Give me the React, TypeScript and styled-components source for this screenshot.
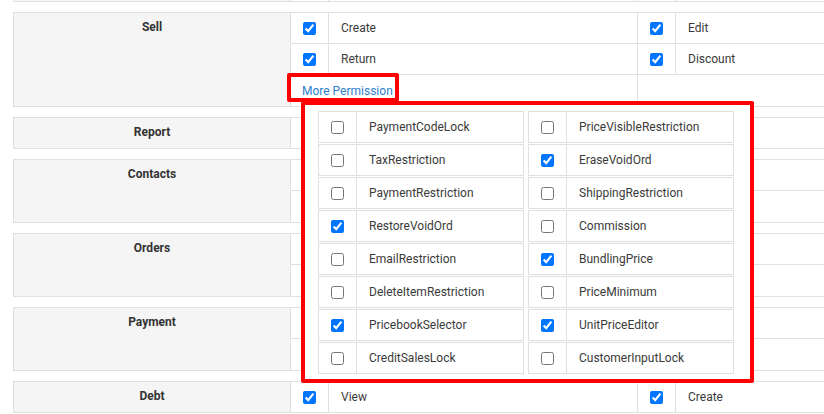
import React from "react";
import styled, { createGlobalStyle } from "styled-components";

const GlobalStyle = createGlobalStyle`
  html, body { margin: 0; padding: 0; overflow: hidden; background: #fff; }
  body {
    font-family: Roboto, "Liberation Sans", Arial, sans-serif;
    font-size: 12px;
    color: #333;
  }
`;

const Page = styled.div`
  width: 1000px;
  padding-left: 13px;
  margin-top: -30px;
  display: flex;
  flex-direction: column;
  gap: 10px;
`;

const Block = styled.section`
  display: flex;
  border: 1px solid #e0e0e0;
`;

const Label = styled.div`
  flex: 0 0 277px;
  box-sizing: border-box;
  border-right: 1px solid #e0e0e0;
  background: #f5f5f5;
  font-weight: 700;
  text-align: center;
  line-height: 28px;
  color: #333;
`;

const Rows = styled.div`
  flex: 1;
  display: flex;
  flex-direction: column;
`;

const Row = styled.div<{ $h: number; $last?: boolean }>`
  display: grid;
  grid-template-columns: 38px 309px 38px 1fr;
  box-sizing: border-box;
  height: ${(p) => p.$h}px;
  border-bottom: ${(p) => (p.$last ? "none" : "1px solid #e0e0e0")};
`;

const MoreRow = styled.div`
  display: grid;
  grid-template-columns: 347px 1fr;
  height: 31px;
`;

const CheckCell = styled.div`
  display: flex;
  align-items: center;
  justify-content: center;
  border-right: 1px solid #e0e0e0;
`;

const TextCell = styled.div<{ $divider?: boolean }>`
  display: flex;
  align-items: center;
  padding-left: 12px;
  border-right: ${(p) => (p.$divider ? "1px solid #e0e0e0" : "none")};
  white-space: nowrap;
  color: #3a3a3a;
`;

const Check = styled.input.attrs({ type: "checkbox" })`
  width: 13px;
  height: 13px;
  margin: 0;
`;

const MoreCell = styled.div`
  position: relative;
  display: flex;
  align-items: center;
  padding-left: 11px;
  border-right: 1px solid #e0e0e0;
`;

const MoreLink = styled.a`
  color: #2f7fcb;
  text-decoration: none;
  cursor: pointer;
`;

const Highlight = styled.div`
  position: absolute;
  left: -4px;
  top: -2px;
  width: 112px;
  height: 29px;
  box-sizing: border-box;
  border: 4px solid #ff0000;
  border-radius: 2px;
  z-index: 11;
  pointer-events: none;
`;

const Popover = styled.div`
  position: absolute;
  left: 10px;
  top: 26px;
  width: 453px;
  height: 282px;
  box-sizing: border-box;
  border: 4px solid #ff0000;
  border-radius: 2px;
  background: #fff;
  padding: 6px 0 0 13px;
  display: grid;
  grid-template-columns: 206px 206px;
  column-gap: 4px;
  row-gap: 1px;
  align-content: start;
  z-index: 10;
`;

const Item = styled.div`
  display: flex;
  height: 32px;
  box-sizing: border-box;
  border: 1px solid #e0e0e0;
`;

const ItemCheck = styled.div`
  flex: 0 0 38px;
  box-sizing: border-box;
  display: flex;
  align-items: center;
  justify-content: center;
  border-right: 1px solid #e0e0e0;
`;

const ItemText = styled.div`
  display: flex;
  align-items: center;
  padding-left: 12px;
  white-space: nowrap;
  color: #3a3a3a;
`;

type Perm = { name: string; on: boolean } | null;
type Group = { label: string; rows: [Perm, Perm][] };

const before: Group[] = [{ label: "", rows: [[null, null]] }];

const after: Group[] = [
  { label: "Report", rows: [[{ name: "View", on: true }, null]] },
  {
    label: "Contacts",
    rows: [
      [{ name: "View", on: true }, { name: "Create", on: true }],
      [{ name: "Edit", on: true }, { name: "Delete", on: true }],
    ],
  },
  {
    label: "Orders",
    rows: [
      [{ name: "View", on: true }, { name: "Create", on: true }],
      [{ name: "Edit", on: true }, { name: "Delete", on: true }],
    ],
  },
  {
    label: "Payment",
    rows: [
      [{ name: "View", on: true }, { name: "Create", on: true }],
      [{ name: "Edit", on: true }, { name: "Delete", on: true }],
    ],
  },
  { label: "Debt", rows: [[{ name: "View", on: true }, { name: "Create", on: true }]] },
];

const extra: [string, boolean][] = [
  ["PaymentCodeLock", false],
  ["PriceVisibleRestriction", false],
  ["TaxRestriction", false],
  ["EraseVoidOrd", true],
  ["PaymentRestriction", false],
  ["ShippingRestriction", false],
  ["RestoreVoidOrd", true],
  ["Commission", false],
  ["EmailRestriction", false],
  ["BundlingPrice", true],
  ["DeleteItemRestriction", false],
  ["PriceMinimum", false],
  ["PricebookSelector", true],
  ["UnitPriceEditor", true],
  ["CreditSalesLock", false],
  ["CustomerInputLock", false],
];

function PermRow({ pair, h, last }: { pair: [Perm, Perm]; h: number; last?: boolean }) {
  const [a, b] = pair;
  return (
    <Row $h={h} $last={last}>
      <CheckCell>{a && <Check defaultChecked={a.on} />}</CheckCell>
      <TextCell $divider>{a?.name}</TextCell>
      <CheckCell>{b && <Check defaultChecked={b.on} />}</CheckCell>
      <TextCell>{b?.name}</TextCell>
    </Row>
  );
}

function GroupBlock({ g }: { g: Group }) {
  const n = g.rows.length;
  return (
    <Block>
      <Label>{g.label}</Label>
      <Rows>
        {g.rows.map((r, i) => {
          const last = i === n - 1;
          const h = last ? (n > 1 ? 31 : 30) : 31;
          return <PermRow key={i} pair={r} h={h} last={last} />;
        })}
      </Rows>
    </Block>
  );
}

export default function App() {
  return (
    <>
      <GlobalStyle />
      <Page>
        {before.map((g, i) => (
          <GroupBlock key={i} g={g} />
        ))}
        <Block>
          <Label>Sell</Label>
          <Rows>
            <PermRow pair={[{ name: "Create", on: true }, { name: "Edit", on: true }]} h={31} />
            <PermRow pair={[{ name: "Return", on: true }, { name: "Discount", on: true }]} h={31} />
            <MoreRow>
              <MoreCell>
                <MoreLink>More Permission</MoreLink>
                <Highlight />
                <Popover>
                  {extra.map(([name, on]) => (
                    <Item key={name}>
                      <ItemCheck>
                        <Check defaultChecked={on} />
                      </ItemCheck>
                      <ItemText>{name}</ItemText>
                    </Item>
                  ))}
                </Popover>
              </MoreCell>
              <div />
            </MoreRow>
          </Rows>
        </Block>
        {after.map((g) => (
          <GroupBlock key={g.label} g={g} />
        ))}
      </Page>
    </>
  );
}
